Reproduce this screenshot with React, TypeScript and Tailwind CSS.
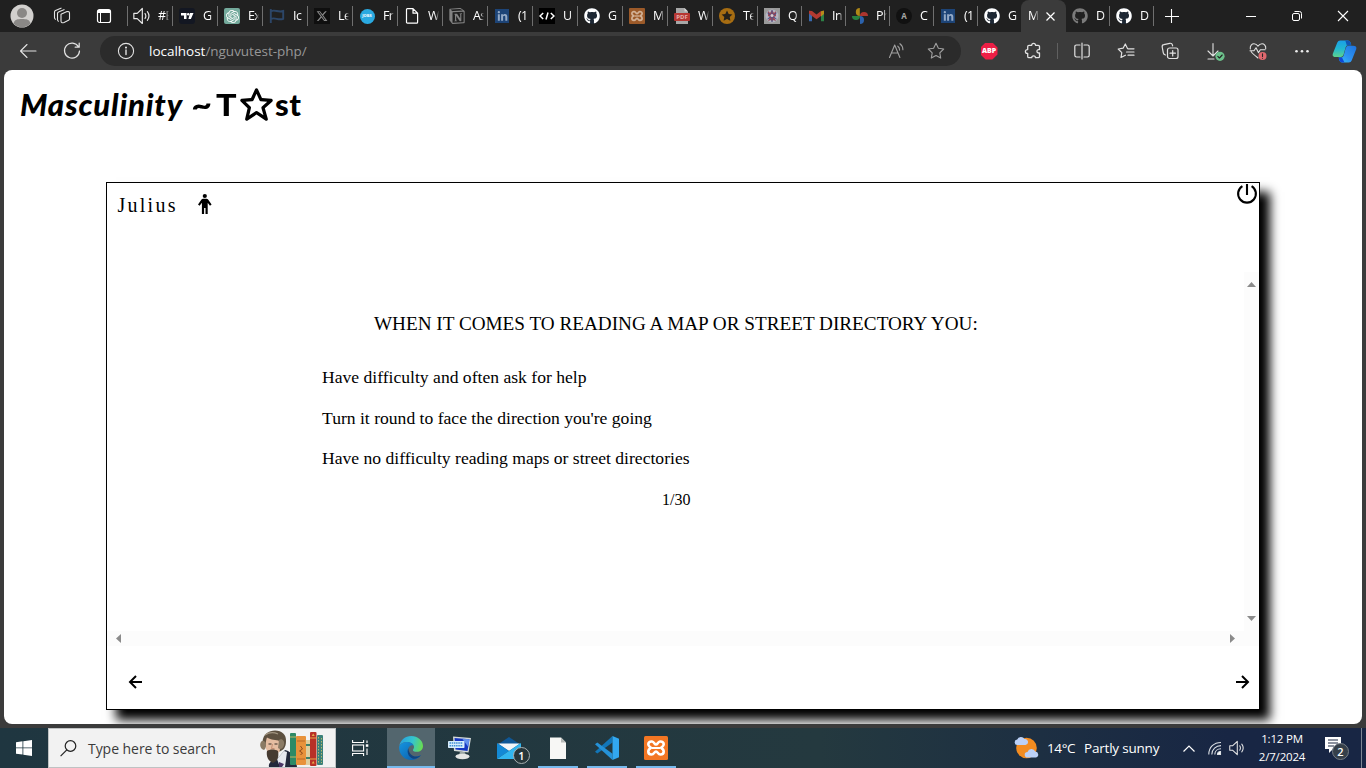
import React from "react";
import { BiStar, BiLeftArrowAlt, BiRightArrowAlt } from "react-icons/bi";
import { FaGithub, FaLinkedinIn } from "react-icons/fa";
import { FaXTwitter } from "react-icons/fa6";
import { SiOpenai, SiNotion } from "react-icons/si";

const ui = "font-['Open_Sans','Noto_Sans',sans-serif]";

function Speaker({ size = 17, color = "#e8e8e8" }: { size?: number; color?: string }) {
  return (
    <svg className="shrink-0" width={size} height={size} viewBox="0 0 17 17" fill="none" stroke={color} strokeWidth="1.1" strokeLinejoin="round" strokeLinecap="round">
      <path d="M.8 6h3.200L8.800 1.400v14.200L4 11H.8z" />
      <path d="M11.400 6.200c.9 1.400.9 3.200 0 4.600M13.600 4.400c1.800 2.500 1.800 5.700 0 8.200" />
    </svg>
  );
}

function Github() {
  return (
    <span className="flex size-4 items-center justify-center rounded-full bg-[#1d2733]">
      <FaGithub size={16} color="#ffffff" />
    </span>
  );
}

function Linkedin() {
  return (
    <span className="flex size-[14px] items-center justify-center bg-[#1d4477]">
      <FaLinkedinIn size={11} color="#93a9c6" />
    </span>
  );
}

function Xampp({ size, dim }: { size: number; dim?: boolean }) {
  const ink = dim ? "#d2b196" : "#ffffff";
  return (
    <svg width={size} height={size} viewBox="0 0 24 24">
      <rect width="24" height="24" rx="1.500" fill={dim ? "#9c5a29" : "#f37623"} />
      <g fill="none" stroke={ink} strokeWidth="2.600" strokeLinejoin="round">
        <path d="M8 5.500C5.500 5.300 4.300 6.600 4.300 8.300c0 1.900 1.600 2.600 2.600 3.500-1.500.8-2.600 2-2.600 3.700 0 1.900 1.400 3 3.200 3 2.600 0 2.800-3 4.500-3s1.900 3 4.500 3c1.800 0 3.200-1.100 3.200-3 0-1.700-1.100-2.900-2.600-3.700 1-.9 2.600-1.600 2.600-3.500 0-1.700-1.200-3-3.700-2.800-2.200.2-2.300 3-4 3s-1.800-2.800-4-3z" />
        <path d="M8 12h8" strokeWidth="2" />
      </g>
    </svg>
  );
}

type TabItem = { label: string; icon: React.ReactNode };

const wideTabs: TabItem[] = [
  { label: "#E", icon: <Speaker size={18} /> },
  {
    label: "G",
    icon: (
      <svg width="16" height="16" viewBox="0 0 16 16">
        <rect width="16" height="16" rx="3" fill="#131722" />
        <path d="M2 5h5.500v6H5V7.500H2zM11 5h3.500l-2.600 6H9.400z" fill="#ffffff" />
        <circle cx="9.200" cy="6.200" r="1.200" fill="#ffffff" />
      </svg>
    ),
  },
  {
    label: "Ex",
    icon: (
      <span className="flex size-4 items-center justify-center rounded-[2px] bg-[#74aa9c]">
        <SiOpenai size={13} color="#ffffff" />
      </span>
    ),
  },
  {
    label: "Ic",
    icon: (
      <svg width="16" height="16" viewBox="0 0 16 16" fill="none" stroke="#2c4668" strokeWidth="1.900">
        <path d="M1.800 1v14M2 3.200c4-2 7 1.600 12.200-.2v7.800C9 12.800 6 8.800 2 11" />
      </svg>
    ),
  },
  {
    label: "Le",
    icon: (
      <span className="flex size-4 items-center justify-center bg-[#0f0f0f]">
        <FaXTwitter size={12} color="#8b8b8b" />
      </span>
    ),
  },
  {
    label: "Fr",
    icon: (
      <span className="flex size-[15px] items-center justify-center rounded-full bg-[#2aa9e0] text-[4px] font-bold text-white">
        JOBS
      </span>
    ),
  },
  {
    label: "W",
    icon: (
      <svg width="16" height="16" viewBox="0 0 16 16" fill="none" stroke="#ffffff" strokeWidth="1.200" strokeLinejoin="round">
        <path d="M2.500 1.500C2.500 1 2.800.6 3.400.6H9l4.600 4.600v9c0 .6-.4 1-1 1H3.500c-.6 0-1-.4-1-1zM9 .6v4.600h4.600" />
      </svg>
    ),
  },
  { label: "As", icon: <SiNotion size={16} color="#828282" /> },
  { label: "(1", icon: <Linkedin /> },
  {
    label: "U",
    icon: (
      <svg width="16" height="16" viewBox="0 0 16 16">
        <rect width="16" height="16" fill="#000000" />
        <path d="M4.200 5 1 8l3.200 3M11.800 5 15 8l-3.200 3M9 4.500l-2 7" fill="none" stroke="#ffffff" strokeWidth="1.500" />
      </svg>
    ),
  },
  { label: "G", icon: <Github /> },
  { label: "M", icon: <Xampp size={16} dim /> },
  {
    label: "W",
    icon: (
      <span className="relative flex h-4 w-4 items-center justify-center">
        <svg className="absolute" width="16" height="16" viewBox="0 0 16 16">
          <path d="M2 0h8.500L14 3.500V16H2z" fill="#a7a7a7" />
          <path d="M10.500 0v3.500H14" fill="#d5d5d5" />
          <rect y="5" width="16" height="8" rx="1" fill="#b63733" />
        </svg>
        <span className="relative top-[1px] text-[6px] leading-none font-bold text-[#e5b0ae]">PDF</span>
      </span>
    ),
  },
  {
    label: "Te",
    icon: (
      <svg width="16" height="16" viewBox="0 0 16 16">
        <circle cx="8" cy="8" r="8" fill="#a76d12" />
        <path d="m8 2.600 1.700 3.400 3.700.5-2.700 2.600.7 3.700L8 11l-3.400 1.800.7-3.700-2.700-2.600 3.700-.5z" fill="#25211a" />
      </svg>
    ),
  },
];

const narrowTabs: TabItem[] = [
  {
    label: "Q",
    icon: (
      <svg width="16" height="16" viewBox="0 0 16 16">
        <rect width="16" height="16" fill="#9a9a9a" />
        <circle cx="8" cy="8" r="6.500" fill="#b4b6c2" />
        <path d="M4 3l2 2 2-3 2 3 2-2v5l-2 1 2 4-3-1-1 2-1-2-3 1 2-4-2-1z" fill="#9b4858" />
        <path d="M8 2v12M3.500 5l9 6M12.500 5l-9 6" stroke="#44528c" strokeWidth="1" />
        <circle cx="8" cy="7.500" r="1.500" fill="#d9cdd0" />
      </svg>
    ),
  },
  {
    label: "In",
    icon: (
      <svg width="15" height="12" viewBox="0 0 15 12">
        <path d="M0 2v9.300h3V5z" fill="#3969ad" />
        <path d="M12 5v6.300h3V2z" fill="#2c8146" />
        <path d="M12 1.300 15 .6V4l-3 2.400z" fill="#b98a1b" />
        <path d="M0 .8 3 1l4.500 3.500L12 1v5L7.500 9.300 3 6 0 3.600z" fill="#b33a31" />
      </svg>
    ),
  },
  {
    label: "Ph",
    icon: (
      <svg width="16" height="16" viewBox="0 0 16 16">
        <path d="M8 0v8a4 4 0 0 1 0-8z" fill="#af8816" transform="translate(-.2 0)" />
        <path d="M16 8H8a4 4 0 0 1 8 0z" fill="#ac352e" />
        <path d="M8 16V8a4 4 0 0 1 0 8z" fill="#2b62ad" />
        <path d="M0 8h8a4 4 0 0 1-8 0z" fill="#28803f" />
      </svg>
    ),
  },
  {
    label: "C",
    icon: (
      <span className="flex size-4 items-center justify-center rounded-full bg-[#111111] text-[8px] font-bold text-[#a6a6a6]">A</span>
    ),
  },
  { label: "(1", icon: <Linkedin /> },
  { label: "G", icon: <Github /> },
];

function Tab({ item, width, divider = true }: { item: TabItem; width: "wide" | "narrow"; divider?: boolean }) {
  return (
    <div className={`flex h-8 shrink-0 items-center ${width === "wide" ? "w-[45px]" : "w-11"}`}>
      <span className={`h-5 w-px ${divider ? "bg-[#6f6f6f]" : ""}`} />
      <span className="ml-[6px] flex w-4 items-center justify-center">{item.icon}</span>
      <span className="ml-2 w-[11px] overflow-hidden text-[12.500px] tracking-[-0.600px] whitespace-nowrap text-white [mask-image:linear-gradient(to_right,black_65%,transparent)]">
        {item.label}
      </span>
    </div>
  );
}

function TabStrip() {
  return (
    <div className="flex h-8 items-center bg-[#202020]">
      <div className="flex w-[127px] items-center">
        <svg className="ml-[10px]" width="24" height="24" viewBox="0 0 24 24">
          <circle cx="12" cy="12" r="11.500" fill="#d2d0ce" />
          <circle cx="12" cy="9" r="5" fill="#8a8886" />
          <path d="M3.500 19.500c1-4 4-4.500 8.500-4.500s7.500.5 8.500 4.500A11.500 11.500 0 0 1 3.500 19.500z" fill="#8a8886" />
        </svg>
        <svg className="ml-[19px]" width="18" height="18" viewBox="0 0 18 18" fill="none" stroke="#e4e4e4" strokeWidth="1.100" strokeLinejoin="round">
          <path d="M8 7.200 14 4.600q2.500-.6 2.500 1.600v5.600q0 1.100-1 1.500l-4.500 2.200q-3 1.100-3-1.700z" />
          <path d="M5.800 14.500Q4.500 14 4.500 12.500V6.600q0-1.100 1-1.500L11.500 2.600" />
          <path d="M2.800 12.500Q1.500 12 1.500 10.500V5q0-1.100 1-1.500L8.500 1" />
        </svg>
        <svg className="ml-[25px]" width="16" height="16" viewBox="0 0 16 16" fill="none" stroke="#ffffff">
          <rect x="1.500" y="1.500" width="13" height="13" rx="2" strokeWidth="1.200" />
          <path d="M2 3.500h12" strokeWidth="3" />
          <path d="M4.500 5v9" strokeWidth="1" />
        </svg>
      </div>
      {wideTabs.map((t, i) => (
        <Tab key={i} item={t} width="wide" />
      ))}
      {narrowTabs.map((t, i) => (
        <Tab key={i} item={t} width="narrow" />
      ))}
      <div className="flex h-8 w-[45px] items-center rounded-t-lg bg-[#3b3b3b]">
        <span className="ml-[7px] w-[11px] overflow-hidden text-[12.500px] text-white [mask-image:linear-gradient(to_right,black_55%,transparent)]">M</span>
        <svg className="ml-[7px]" width="9" height="9" viewBox="0 0 9 9" stroke="#ffffff" strokeWidth="1.200">
          <path d="m.5.5 8 8m0-8-8 8" />
        </svg>
      </div>
      <div className="-ml-px flex">
        <Tab item={{ label: "D", icon: <FaGithub size={16} color="#7b7b7b" /> }} width="narrow" divider={false} />
        <Tab item={{ label: "D", icon: <Github /> }} width="narrow" />
      </div>
      <span className="h-5 w-px bg-[#6f6f6f]" />
      <svg className="ml-[11px]" width="14" height="14" viewBox="0 0 14 14" stroke="#ffffff" strokeWidth="1.100">
        <path d="M6.500 0v14M0 7.500h14" />
      </svg>
      <div className="ml-auto flex items-center">
        <svg className="w-[46px]" height="12" viewBox="0 0 46 12" stroke="#ffffff">
          <path d="M18 6.500h10" />
        </svg>
        <svg className="w-[46px]" height="12" viewBox="0 0 46 12" stroke="#ffffff" fill="none">
          <rect x="18.500" y="3.500" width="7" height="7" rx="1.500" />
          <path d="M20.500 1.500h5q2 0 2 2v5" />
        </svg>
        <svg className="w-[46px]" height="12" viewBox="0 0 46 12" stroke="#ffffff" strokeWidth="1.100">
          <path d="m18 1 10 10m0-10L18 11" />
        </svg>
      </div>
    </div>
  );
}

function ToolCell({ children }: { children: React.ReactNode }) {
  return <span className="flex w-11 items-center justify-center">{children}</span>;
}

function Toolbar() {
  const line = {
    width: 18,
    height: 18,
    viewBox: "0 0 18 18",
    fill: "none",
    stroke: "#e2e2e2",
    strokeWidth: 1.1,
    strokeLinejoin: "round" as const,
    strokeLinecap: "round" as const,
  };
  return (
    <div className="flex h-[38px] items-center bg-[#3b3b3b]">
      <span className="flex w-14 justify-center">
        <svg {...line}>
          <path d="M17 9H1.500M8 2.500 1.500 9 8 15.500" />
        </svg>
      </span>
      <span className="flex w-8 justify-center">
        <svg {...line} strokeWidth={1.25}>
          <path d="M15.500 4.800A7.500 7.500 0 1 0 16.500 9M16.200 1.200v4h-4" />
        </svg>
      </span>
      <div className="ml-3 flex h-[30px] w-[861px] items-center rounded-full bg-[#2b2b2b] pr-4">
        <svg className="ml-[17px]" {...line}>
          <circle cx="9" cy="9" r="7.600" />
          <path d="M9 8v4.500" strokeWidth="1.400" />
          <circle cx="9" cy="5.600" r=".5" fill="#e2e2e2" />
        </svg>
        <span className="ml-[14px] text-[13.500px] tracking-[-0.02px] text-white">
          localhost<span className="text-[#979797]">/nguvutest-php/</span>
        </span>
        <svg className="ml-auto" {...line} stroke="#a0a0a0">
          <path d="M2.500 15.500 7.700 3l5.200 12.500M4.400 11h6.600M10.800 4.200c1.300 1 1.800 2.100 1.800 3.900M12.900 1.700c2.200 1.600 3 3.600 3 6" />
        </svg>
        <svg className="ml-[22px]" {...line} stroke="#a0a0a0">
          <path d="m9 1.300 2.400 4.900 5.300.8-3.900 3.800.9 5.300L9 13.600l-4.700 2.500.9-5.300L1.300 7l5.300-.8z" />
        </svg>
      </div>
      <div className="ml-[6px] flex items-center">
        <ToolCell>
          <span className="flex size-[17px] items-center justify-center bg-[#ed1e45] text-[7px] font-extrabold text-white [clip-path:polygon(30%_0,70%_0,100%_30%,100%_70%,70%_100%,30%_100%,0_70%,0_30%)]">
            ABP
          </span>
        </ToolCell>
        <ToolCell>
          <svg {...line} strokeWidth={1.3}>
            <path d="M5 3.300h2.700a1.900 1.900 0 0 1 3.800 0h2.700q1.300 0 1.300 1.300v3h-.9a1.700 1.700 0 0 0 0 3.400h.9v3.400q0 1.300-1.300 1.300h-2.700a1.900 1.900 0 0 0-3.800 0H5q-1.300 0-1.300-1.300V11.400h-.4a1.900 1.900 0 0 1 0-3.800h.4v-3q0-1.300 1.300-1.300z" />
          </svg>
        </ToolCell>
        <span className="flex w-1 justify-center">
          <span className="h-4 w-px bg-[#606060]" />
        </span>
        <span className="flex w-11 items-center justify-center pl-px">
          <svg {...line} strokeWidth={1.2}>
            <path d="M7 3H3.500q-1.700 0-1.700 1.700v8.600Q1.800 15 3.500 15H7M11 3h3.500q1.700 0 1.700 1.700v8.600q0 1.700-1.700 1.700H11M9 1v16" />
          </svg>
        </span>
        <span className="flex w-11 items-center justify-center pl-[2px]">
          <svg {...line} strokeWidth={1.2}>
            <path d="M10.500 6.500 8.300 2 6.100 6.200l-4.900.8 3.600 3.600-.8 4.900 4.400-2.300M11 6.800h6M9.500 10h7.500M11 13.200h6" />
          </svg>
        </span>
        <span className="flex w-11 items-center justify-center pl-[2px]">
          <svg {...line} strokeWidth={1.2}>
            <rect x="6.500" y="6" width="10.500" height="10.500" rx="2" />
            <path d="M11.700 8.600v5.300M9 11.200h5.400M4.500 13c-1.400-.2-2-1-2.200-2.100L1.200 5c-.2-1.300.5-2.200 1.600-2.400l6-1.300c1.300-.2 2.300.4 2.600 1.600l.2 1" />
          </svg>
        </span>
        <span className="flex w-11 items-center justify-center pl-[5px]">
          <svg {...line} width={19} height={19} viewBox="0 0 19 19">
            <path d="M7 1.500v12M2 9l5 5 5-5M2 17h6" />
            <circle cx="14" cy="14.300" r="4.600" fill="#6cc08b" stroke="none" />
            <path d="m11.800 14.400 1.600 1.600 2.800-3" stroke="#222222" />
          </svg>
        </span>
        <span className="flex w-11 items-center justify-center pl-[2px]">
          <svg {...line}>
            <path d="M9 16C6 13.500 3.500 11.500 2.200 9.700M1.300 7C.8 3.500 3 1.800 5 1.800c1.800 0 3 1 4 2.300 1-1.300 2.200-2.300 4-2.300 2 0 4.200 1.700 3.700 5M1 8.800h4l2-3 2.500 5 1.800-3H16" />
            <circle cx="13.500" cy="14" r="4" fill="#e0686e" stroke="none" />
            <path d="M13.500 11.700v2.700M13.500 16.200v.1" stroke="#272727" />
          </svg>
        </span>
        <span className="flex w-11 items-center justify-center pl-px">
          <svg {...line} stroke="none" fill="#ededed">
            <circle cx="3.500" cy="9.200" r="1.300" />
            <circle cx="9" cy="9.200" r="1.300" />
            <circle cx="14.500" cy="9.200" r="1.300" />
          </svg>
        </span>
        <span className="flex w-[42px] items-center justify-center">
          <svg width="25" height="23" viewBox="0 0 26 24">
            <defs>
              <linearGradient id="cpA" x1="0" y1="0" x2="0" y2="1">
                <stop offset="0" stopColor="#1a9fe8" />
                <stop offset=".5" stopColor="#22b7d1" />
                <stop offset="1" stopColor="#5ed38c" />
              </linearGradient>
              <linearGradient id="cpB" x1="1" y1="0" x2="0" y2="1">
                <stop offset="0" stopColor="#1d72dc" />
                <stop offset=".6" stopColor="#2e94f4" />
                <stop offset="1" stopColor="#32c6f5" />
              </linearGradient>
            </defs>
            <path d="M5.500 2.500Q6.300.5 8.500.5h8q2 0 2.800 2l.8 3h-3.500q-1.800 0-2.400 2l-2.200 8q-.7 2.300-3 2.300H4q-4 0-3.300-3.300z" fill="url(#cpA)" />
            <path d="M20.500 21.500q-.8 2-3 2h-7q-2 0-2.800-2l-.8-3.200h2.800q1.800 0 2.400-2l2.200-8q.7-2.300 3-2.300H22q4 0 3.300 3.300z" fill="url(#cpB)" />
            <path d="M13.800.5H16.500q2 0 2.800 2l.8 3h-4.700z" fill="#1156b5" />
            <path d="M6.900 18.300h3.500l2.600 5.200h-2.500q-2 0-2.800-2z" fill="#0e48d7" />
          </svg>
        </span>
      </div>
    </div>
  );
}

function Triangle({ points, w, h }: { points: string; w: number; h: number }) {
  return (
    <svg width={w} height={h} viewBox={`0 0 ${w} ${h}`}>
      <polygon points={points} fill="#8b8b8b" />
    </svg>
  );
}

function QuizCard() {
  return (
    <section className="ml-[102px] flex h-[528px] w-[1154px] flex-col border border-black bg-white font-['Liberation_Serif',serif] text-black shadow-[10px_10px_10px_#000]">
      <header className="flex h-[89px] shrink-0 items-start">
        <span className="mt-[10px] ml-[10.500px] text-[20px] leading-6 tracking-[2.250px]">Julius</span>
        <svg className="mt-[10px] ml-[20px]" width="14" height="22" viewBox="0 0 14 22">
          <circle cx="6.800" cy="3" r="2.100" />
          <path d="M5 5.800h3.600q.9 0 1.500.8l3.500 5-1.600 1.200-2.300-3.100V21H7.500v-6H6.100v6H3.900V9.700l-2.300 3.100L0 11.600l3.500-5q.6-.8 1.500-.8z" />
        </svg>
        <svg className="mr-px ml-auto" width="22" height="22" viewBox="0 0 22 22" fill="none" stroke="#000000" strokeWidth="2.100">
          <path d="M6.400 3.100a8.900 8.900 0 1 0 9.200 0" />
          <path d="M11 1v11" />
        </svg>
      </header>
      <div className="flex h-[359px] shrink-0">
        <div className="flex-1">
          <h2 className="mt-[39px] ml-[267px] text-[19.200px] leading-[26px] whitespace-nowrap">
            WHEN IT COMES TO READING A MAP OR STREET DIRECTORY YOU:
          </h2>
          <ul className="mt-[27px] ml-[215px] flex flex-col gap-[14.500px] text-[17.600px] leading-[26px]">
            <li>Have difficulty and often ask for help</li>
            <li>Turn it round to face the direction you're going</li>
            <li>Have no difficulty reading maps or street directories</li>
          </ul>
          <p className="mt-[17px] ml-[555px] text-[16px] leading-6">1/30</p>
        </div>
        <div className="flex w-[15px] flex-col items-center justify-between bg-[#fcfcfc] pt-[10px] pb-[10px]">
          <Triangle w={9} h={5} points="4.500,0 9,5 0,5" />
          <Triangle w={9} h={5} points="0,0 9,0 4.500,5" />
        </div>
      </div>
      <div className="flex h-[15px] shrink-0 items-center justify-between bg-[#fcfcfc] pr-[24px] pl-[9px]">
        <Triangle w={5} h={9} points="5,0 5,9 0,4.500" />
        <Triangle w={5} h={9} points="0,0 5,4.500 0,9" />
      </div>
      <footer className="flex flex-1 items-center justify-between pt-[9px] pr-[5px] pl-[17px]">
        <BiLeftArrowAlt size={24} />
        <BiRightArrowAlt size={24} />
      </footer>
    </section>
  );
}

function Page() {
  return (
    <main className="mx-1 h-[654px] overflow-hidden rounded-lg bg-white">
      <h1 className="flex h-[112px] items-start pt-[14px] pl-4 font-['Lato',sans-serif] text-[31px] leading-10 font-black text-black">
        <span className="w-[173px] tracking-[0.820px] italic">Masculinity</span>
        <span className="w-[23px] scale-x-115">~</span>
        <span className="w-[20px] origin-left scale-x-110">T</span>
        <BiStar className="mt-px ml-[1px]" size={39} />
        <span className="-ml-px tracking-[0.500px]">st</span>
      </h1>
      <QuizCard />
    </main>
  );
}

function SearchArt() {
  return (
    <svg className="mr-[8px] ml-auto" width="68" height="37" viewBox="0 0 68 37">
      <path d="M10 37c-1-4 3-7 8-8l8-9c8 2 11 8 12 17z" fill="#23283b" />
      <path d="M18 29l3 8h5l2-15-3-1z" fill="#e7e8ee" />
      <path d="M20 32l5 2-2 3h-3z" fill="#4b3565" />
      <ellipse cx="14.500" cy="14" rx="8.500" ry="11" fill="#e5bda2" />
      <path d="M3.500 12C4 4 10 .5 16 .5c7 0 11.500 4 11 11 0 6-3 9-6.500 10 1-4 1-8-1-11C15 10 10 9 8 7.500 7 10 6.500 14 6.500 17 3 16 2.500 14 3.500 12z" fill="#5d503f" />
      <path d="M1.500 13c1-3 4-3 5 0s0 6-1.500 7c-3-1-4.500-4-3.500-7zM20 10c3-2 6 1 5 5s-4 5-6 3z" fill="#8a7a64" />
      <path d="M6 5q6-4 13-1" stroke="#a39682" strokeWidth="1.300" fill="none" />
      <path d="M8 21c3-2 8-2 11 0 1 5 0 10-5 12-5-2-7-7-6-12z" fill="#453a30" />
      <path d="M9.500 14h3M15.500 14h3" stroke="#3b3028" strokeWidth="1.200" />
      <path d="m13.500 14-1 4.500h3" stroke="#c48e72" strokeWidth="1" fill="none" />
      <rect x="31" y="3" width="6" height="32" rx="1" fill="#2d8a66" />
      <path d="M31 7h6M31 27h6" stroke="#c2b661" />
      <rect x="37" y="6" width="10" height="29" rx="1" fill="#e8923b" />
      <path d="M38 11h8M38 29h8" stroke="#b8692a" />
      <path d="m41.500 16 2 3-3 2 3 2-2 2" stroke="#8d4a1d" fill="none" />
      <rect x="47" y="10" width="4" height="25" fill="#dfce9e" />
      <path d="M47 15h4M47 28h4" stroke="#3e806b" strokeWidth="2" />
      <rect x="51" y="2" width="6.500" height="34" rx="1" fill="#b83127" />
      <path d="M51 8h6.500M51 29h6.500" stroke="#e4ac4b" />
      <path d="m54.200 3.500 1.500 2.500h-3zM54.200 31l1.500 2.500h-3z" fill="#e4ac4b" />
      <rect x="58" y="5" width="6" height="30" rx="1" fill="#3b8179" />
      <path d="M59.500 7v26M62.500 8v25" stroke="#b8b76f" strokeDasharray="1.500 1.500" />
    </svg>
  );
}

function TaskApp({ children, state = "none" }: { children: React.ReactNode; state?: "active" | "open" | "none" }) {
  return (
    <div className={`mr-px flex h-10 w-12 flex-col items-center ${state === "active" ? "bg-[#53666e]" : ""}`}>
      <div className="flex h-[38px] items-center pt-[2px]">{children}</div>
      <span className={`h-[2px] ${state === "active" ? "w-12 bg-[#76b9ed]" : state === "open" ? "w-10 bg-[#76b9ed]" : "w-0"}`} />
    </div>
  );
}

function Taskbar() {
  return (
    <div className={`flex h-10 items-center overflow-hidden bg-linear-to-r from-[#1f3640] from-0% via-[#24393f] via-60% to-[#182644] to-90% text-white ${ui}`}>
      <span className="flex w-12 justify-center">
        <svg width="16" height="16" viewBox="0 0 16 16" fill="#ffffff">
          <path d="M0 2.300 6.500 1.300v6.200H0zM7.300 1.200 16 0v7.500H7.300zM0 8.300h6.500v6.300L0 13.700zM7.300 8.300H16V16l-8.700-1.300z" />
        </svg>
      </span>
      <div className="flex h-10 w-72 items-center border border-[#bfc2c3] bg-[#f2f2f2]">
        <svg className="ml-[11px]" width="17" height="17" viewBox="0 0 17 17" fill="none" stroke="#222222" strokeWidth="1.200">
          <circle cx="10.500" cy="6" r="5.300" />
          <path d="M6.800 9.800.6 16.200" />
        </svg>
        <span className="ml-[11px] text-[14px] tracking-[-0.050px] text-[#3b3b3b]">Type here to search</span>
        <SearchArt />
      </div>
      <span className="mr-[3px] flex w-12 justify-center">
        <svg width="17" height="16" viewBox="0 0 17 16" fill="none" stroke="#ffffff" strokeWidth="1.100">
          <path d="M.6 0v2.500h11V0M.6 16v-2.500h11V16" />
          <rect x=".6" y="5" width="11" height="6" />
          <path d="M15 .5V3M15 8.500V15" />
          <rect x="13.800" y="4.300" width="2.500" height="2.500" fill="#ffffff" stroke="none" />
        </svg>
      </span>
      <TaskApp state="active">
        <svg width="24" height="24" viewBox="0 0 24 24">
          <defs>
            <linearGradient id="edgeTop" x1="0" y1=".3" x2="1" y2=".5">
              <stop offset="0" stopColor="#279fe0" />
              <stop offset=".55" stopColor="#35c5ce" />
              <stop offset="1" stopColor="#67dc52" />
            </linearGradient>
            <linearGradient id="edgeLow" x1="0" y1="0" x2="1" y2="1">
              <stop offset="0" stopColor="#1594e0" />
              <stop offset="1" stopColor="#0c59a4" />
            </linearGradient>
          </defs>
          <path d="M.3 10C1.300 4 6.200 0 12.200 0 18.700 0 24 4.500 24 10c0 3.600-2.800 5.800-6 5.800-3 0-4.500-1-4-2.100.4-.7 1-1.300 1-2.700 0-2.500-2.900-5-7-5C4.500 6 1.700 7.600.3 10z" fill="url(#edgeTop)" />
          <path d="M.2 10.500C1.300 7.500 4.500 6 8 6c3.500 0 6 1.600 6.700 3.500-2.500-.8-5.700 1.300-5.700 4.800 0 4 4 7.200 8.500 6.300 1.800-.3 3.300-1 4.500-1.600C19.800 22.200 16.200 24 12 24 5 24-.5 17.500.2 10.500z" fill="url(#edgeLow)" />
          <path d="M9.300 12.200C7.500 16 9.500 21 13.500 22.500c3 .7 6.200-.8 8.300-3.300-1.300.7-2.900 1.300-4.500 1.300-4.300 0-7.700-3.600-8-8.300z" fill="#12437e" />
        </svg>
      </TaskApp>
      <TaskApp>
        <svg width="24" height="24" viewBox="0 0 24 24">
          <path d="M5 .5 23 2l-2.500 14.500L6 15z" fill="#d5dad9" />
          <path d="M6.500 2 21.500 3.200 19.500 15 7.500 13.500z" fill="#1637c2" />
          <path d="m14 2.600 7.500.6-1.300 7.500z" fill="#6390ed" />
          <path d="m12 15.500 5 .7 1 3.300h-7z" fill="#9da8a6" />
          <ellipse cx="14.500" cy="20.500" rx="7" ry="2.700" fill="#e4e6e4" />
          <rect x="0" y="5" width="16.500" height="7" rx=".7" fill="#d8edfc" />
          <path d="M1.500 7h13.500M1.500 9.800h13.500" stroke="#3f8ed3" strokeDasharray="1.500 .7" strokeWidth="1.500" />
        </svg>
      </TaskApp>
      <TaskApp>
        <span className="relative">
          <svg width="24" height="24" viewBox="0 0 24 24">
            <path d="M0 9 12 1l12 8v5H0z" fill="#0f5796" />
            <path d="M1 7.500h22L12 15z" fill="#f3f6f8" />
            <path d="M0 7 12 15 0 23z" fill="#1389d5" />
            <path d="M24 7 0 23h24z" fill="#32b6ef" />
          </svg>
          <span className="absolute top-[11px] left-[16px] flex size-[17px] items-center justify-center rounded-full border border-[#a8b0b2] bg-[#27363a] text-[11px] leading-none font-semibold">1</span>
        </span>
      </TaskApp>
      <TaskApp state="open">
        <svg width="16" height="22" viewBox="0 0 16 22">
          <path d="M0 .5h11L16 5.500V22H0z" fill="#f7f7f5" />
          <path d="M11 .5v5h5z" fill="#b8bab8" />
        </svg>
      </TaskApp>
      <TaskApp state="open">
        <svg width="24" height="24" viewBox="0 0 24 24">
          <path d="M17.500 0v6.500L2.300 17.500 0 15.800z" fill="#1276b8" />
          <path d="M2.300 6.500 17.500 17.700V24L0 8.300z" fill="#2592d8" />
          <path d="M17.500 0 24 2.800v18.400L17.500 24z" fill="#32a8f0" />
        </svg>
      </TaskApp>
      <TaskApp state="open">
        <Xampp size={24} />
      </TaskApp>
      <div className="ml-auto flex items-center">
        <svg width="25" height="24" viewBox="0 0 25 24">
          <circle cx="12.500" cy="12" r="10.300" fill="#f38c20" />
          <path d="M3.500 9a2.700 2.700 0 0 1-.3-5.400A4 4 0 0 1 10.500 3a3 3 0 0 1 1 6z" fill="#bcd1f7" />
          <path d="M13.500 21.500a2.800 2.800 0 0 1 0-5.600 4.200 4.200 0 0 1 7.800-.3 3 3 0 0 1 .7 5.900z" fill="#bcd1f7" />
        </svg>
        <span className="ml-2 w-[37px] text-[13.500px] tracking-[-0.400px] whitespace-nowrap">14°C</span>
        <span className="w-[95px] text-[13.500px] tracking-[-0.200px] whitespace-nowrap">Partly sunny</span>
        <svg className="mr-[2px] ml-[4px]" width="12" height="7" viewBox="0 0 12 7" fill="none" stroke="#ffffff" strokeWidth="1.200">
          <path d="M.5 6.500 6 1l5.500 5.500" />
        </svg>
        <svg className="ml-[11px]" width="14" height="14" viewBox="0 0 14 14" fill="none" stroke="#dce0e5" strokeWidth="1.100">
          <path d="M.8 13.500C.8 6 6 1.500 13 1.500M3.800 13.500C3.800 8.500 8 4.600 13 4.600M6.800 13.500C6.800 10 9.500 7.700 13 7.700" />
          <path d="M9.500 13.500c0-2 1.500-3 3-3v3z" fill="#ffffff" />
        </svg>
        <span className="ml-[7px]">
          <Speaker size={16} />
        </span>
        <div className="ml-[7px] flex w-[60px] flex-col items-center text-[11.500px] leading-[18px] tracking-[-0.200px] whitespace-nowrap">
          <span>1:12 PM</span>
          <span>2/7/2024</span>
        </div>
        <span className="relative ml-[13px] h-6 w-[36px]">
          <svg width="16" height="17" viewBox="0 0 16 17">
            <path d="M0 1h16v12H8l-4 4v-4H0z" fill="#ffffff" />
            <path d="M3 4h10M3 7h10M3 10h6" stroke="#1c2942" strokeWidth="1.200" />
          </svg>
          <span className="absolute top-[7px] left-[7px] flex size-[17px] items-center justify-center rounded-full border border-[#767d86] bg-[#36404a] text-[11px] leading-none font-semibold">2</span>
        </span>
        <span className="mr-1 h-10 w-px bg-[#7d8794]" />
      </div>
    </div>
  );
}

export default function App() {
  return (
    <div className={`h-[768px] w-[1366px] overflow-hidden bg-[#3b3b3b] ${ui}`}>
      <TabStrip />
      <Toolbar />
      <Page />
      <div className="h-1" />
      <Taskbar />
    </div>
  );
}
